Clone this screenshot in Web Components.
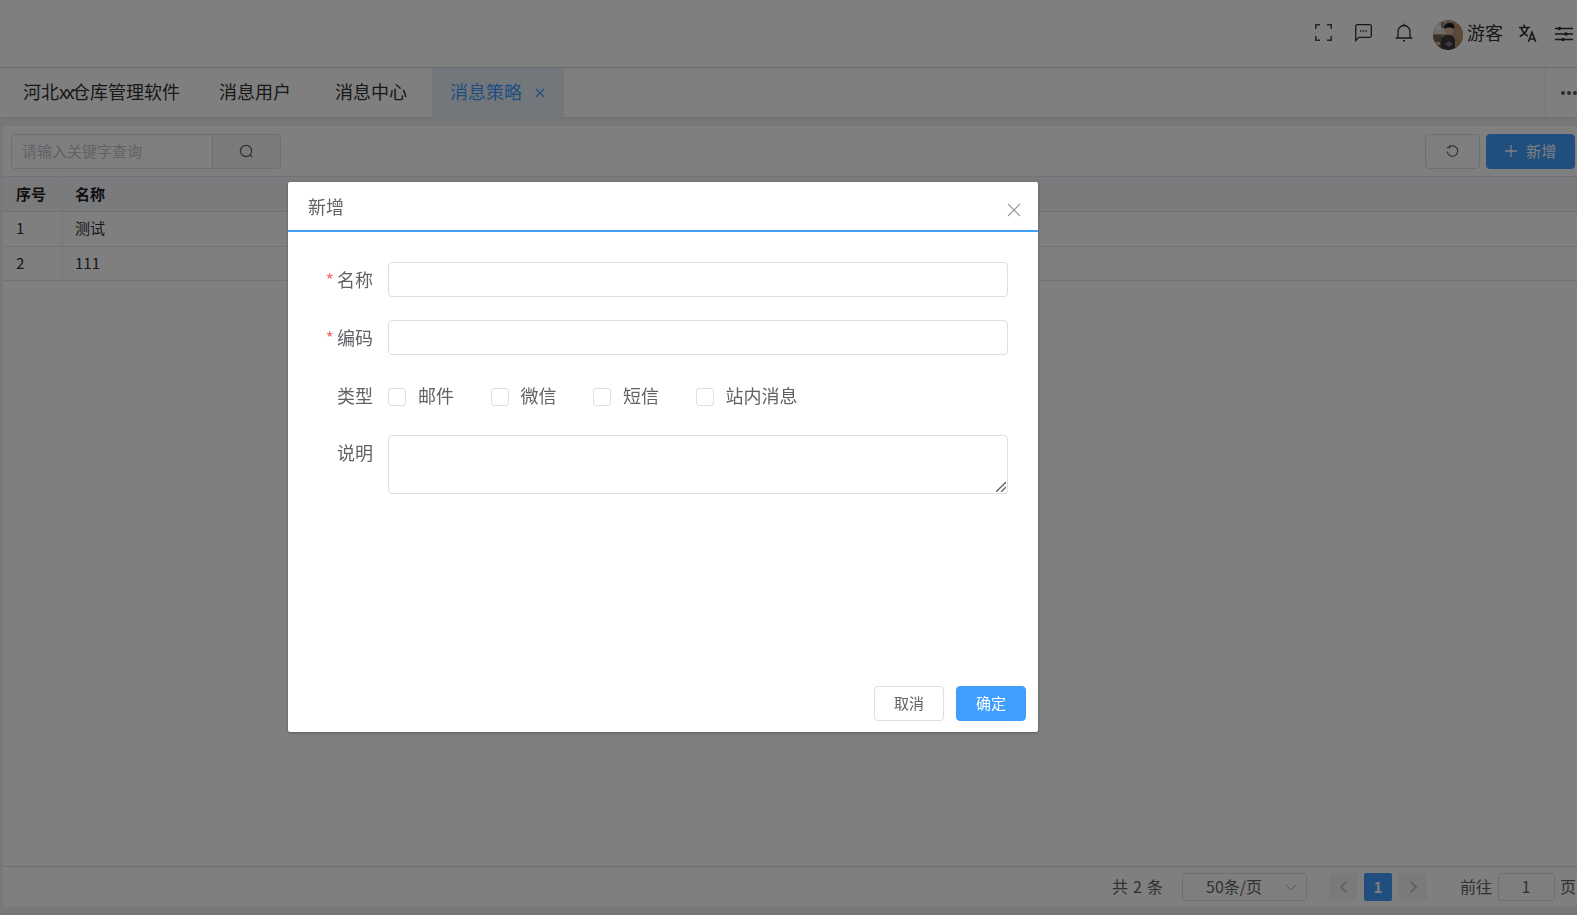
<!DOCTYPE html>
<html lang="zh-CN">
<head>
<meta charset="utf-8">
<title>消息策略</title>
<style>
  html, body { margin: 0; height: 100%; overflow: hidden; }
  body { font-family: "Noto Sans CJK SC", "Noto Sans", sans-serif; color: #303133; background: #eff1f4; }
</style>
</head>
<body>
<app-shell>
  <top-bar></top-bar>
  <tab-bar>
    <tab-item style="padding-right:19px">河北<span style="letter-spacing:-2.5px">xx</span>仓库管理软件</tab-item>
    <tab-item style="margin-right:4px">消息用户</tab-item>
    <tab-item style="margin-right:5px">消息中心</tab-item>
    <tab-item active>消息策略</tab-item>
  </tab-bar>
  <strategy-page></strategy-page>
</app-shell>
<modal-mask></modal-mask>
<add-dialog></add-dialog>

<script>
(function() {
  const icon = {
    search: '<svg width="15" height="15" viewBox="0 0 15 15" fill="none" stroke="currentColor" stroke-width="1.2"><circle cx="7" cy="7" r="5.6"/><path d="M11 11l2.4 2.4"/></svg>',
    refresh: '<svg width="15" height="15" viewBox="0 0 15 15" fill="none" stroke="currentColor" stroke-width="1.2"><path d="M4 3.2A5.2 5.2 0 1 1 2.3 7.5"/><path d="M4.6 1v2.7H1.9"/></svg>',
    plus: '<svg width="14" height="14" viewBox="0 0 14 14" stroke="currentColor" stroke-width="1.3"><path d="M7 1v12M1 7h12"/></svg>',
    close: '<svg width="14" height="14" viewBox="0 0 14 14" stroke="currentColor" stroke-width="1.1"><path d="M1 1l12 12M13 1L1 13"/></svg>',
  };

  function define(name, css, html, setup) {
    const template = document.createElement('template');
    template.innerHTML = `<style>${css}</style>${html}`;
    customElements.define(name, class extends HTMLElement {
      constructor() {
        super();
        this.attachShadow({ mode: 'open' });
        this.shadowRoot.appendChild(template.content.cloneNode(true));
        if (setup) setup(this);
      }
    });
  }

  define('app-shell', `
    :host { display: flex; flex-direction: column; height: 915px; }
  `, `<slot></slot>`);

  define('top-bar', `
    :host { display: flex; align-items: center; justify-content: flex-end; flex: none; height: 65px; padding: 0 4px 2px 0;
      background: #fff; border-bottom: 1px solid #dcdfe6; box-sizing: content-box; color: #303133; }
    svg { display: block; flex: none; }
    .name { font-size: 18px; line-height: 24px; margin: 0 16px 0 4px; padding-bottom: 2px; }
    .ic { margin-right: 23px; }
    .avatar { border-radius: 50%; margin: 5px 0 0 -1px; }
    .trans { margin: 1px 18px 0 0; }
    .tune { margin-top: 2px; }
  `, `
    <svg class="ic" width="17" height="17" viewBox="0 0 17 17" fill="none" stroke="#4a4a4a" stroke-width="1.5"><path d="M.8 5V.8H5M12 .8h4.2V5M16.2 12v4.2H12M5 16.2H.8V12"/></svg>
    <svg class="ic" width="17" height="18" viewBox="0 0 17 18" fill="none" stroke="#303133" stroke-width="1.3"><path d="M2.2.7h12.6a1.5 1.5 0 0 1 1.5 1.5v9.6a1.5 1.5 0 0 1-1.5 1.5H3.6L.7 16.6V2.2A1.5 1.5 0 0 1 2.2.7z"/><path d="M5 7h1.4M7.8 7h1.4M10.6 7H12" stroke-width="1.5"/></svg>
    <svg class="ic" style="margin-right:21px" width="18" height="19" viewBox="0 0 18 19" fill="none" stroke="#303133" stroke-width="1.3"><path d="M.5 15h17M3 15V8.500a6 6 0 0 1 12 0V15"/><path d="M9 .8v1.600M8 17.700h2" stroke-width="1.400"/></svg>
    <svg class="avatar" width="30" height="30" viewBox="0 0 30 30">
      <rect width="30" height="30" fill="#a8957f"/>
      <rect x="0" y="0" width="13" height="14" fill="#d8d4ca"/>
      <rect x="22" y="4" width="8" height="26" fill="#b8926a"/>
      <rect x="3" y="6" width="5" height="4" fill="#f2efe8"/>
      <rect x="8" y="2" width="4" height="6" fill="#8a8378"/>
      <rect x="0" y="15" width="9" height="15" fill="#77634f"/>
      <rect x="2" y="22" width="5" height="3" fill="#c9b8a0"/>
      <path d="M8 30v-9c0-4 3-6 7-6s7 2 7 6v9z" fill="#3a3a3e"/>
      <circle cx="16" cy="10" r="4.500" fill="#d8ae92"/>
      <path d="M11 9c0-5 3-6 6-6s5 2 4 6c-3-2-7-2-10 0z" fill="#1a1a1f"/>
      <path d="M12 24l4-3 4 3-4 3z" fill="#77777c"/>
    </svg>
    <span class="name">游客</span>
    <svg class="ic trans" width="18" height="18" viewBox="0 0 18 18" fill="none" stroke="#303133" stroke-width="1.600"><path d="M0 3.500h11M5.200 .5v3M8.800 3.500C7.800 7.500 4.800 10.500.8 12.500M2 3.500c1 3.500 3.500 6.500 7 8.500"/><path d="M9.500 17.800l3.500-9.500 3.700 9.500M10.700 15h4.800" stroke-width="1.600"/></svg>
    <svg class="tune" width="18" height="16" viewBox="0 0 18 16" stroke="#303133" stroke-width="1.400"><path d="M0 2.500h18M0 8h18M0 13.500h18"/><circle cx="4.500" cy="2.500" r="1.800" fill="#303133" stroke="none"/><circle cx="11" cy="8" r="1.800" fill="#303133" stroke="none"/><circle cx="8" cy="13.500" r="1.800" fill="#303133" stroke="none"/></svg>
  `);

  define('tab-bar', `
    :host { display: flex; flex: none; height: 49px; background: #fff; position: relative;
      box-shadow: 0 1px 4px rgba(0,21,41,.08); }
    .tabs { display: flex; flex: 1; padding-left: 3px; }
    .more { flex: none; width: 32px; border-left: 1px solid #e8eaee; display: flex; align-items: center;
      justify-content: flex-start; gap: 2px; padding-left: 15px; box-sizing: border-box; }
    .more i { width: 4px; height: 4px; border-radius: 50%; background: #555; flex: none; }
  `, `
    <div class="tabs"><slot></slot></div>
    <div class="more"><i></i><i></i><i></i></div>
  `);

  define('tab-item', `
    :host { display: flex; align-items: center; box-sizing: border-box; height: 49px; padding: 0 20px 4px 20px;
      font-size: 18px; color: #303133; white-space: nowrap; }
    :host([active]) { background: #e6eff8; color: #409eff; padding: 0 19px 4px 18px; margin: 0; }
    :host([active]) svg { display: block; margin: 4px 0 0 13px; }
    svg { display: none; }
  `, `
    <slot></slot>
    <svg width="10" height="10" viewBox="0 0 10 10" stroke="currentColor" stroke-width="1.200"><path d="M1 1l8 8M9 1L1 9"/></svg>
  `);

  define('strategy-page', `
    :host { display: flex; flex-direction: column; flex: 1; min-height: 0; margin: 9px 0 8px 3px; background: #fff; }
    .bar { display: flex; align-items: center; justify-content: space-between; flex: none; height: 50px; padding: 0 2px 0 8px; box-sizing: border-box; }
    .right { display: flex; gap: 6px; }
    .fill { flex: 1; }
  `, `
    <div class="bar">
      <search-box></search-box>
      <div class="right">
        <tool-button>${icon.refresh}</tool-button>
        <tool-button primary>${icon.plus}<span>新增</span></tool-button>
      </div>
    </div>
    <data-table></data-table>
    <div class="fill"></div>
    <table-pager></table-pager>
  `);

  define('search-box', `
    :host { display: flex; box-sizing: border-box; width: 270px; height: 35px; border: 1px solid #dcdfe6; border-radius: 4px; overflow: hidden; }
    input { flex: none; width: 200px; box-sizing: border-box; border: 0; outline: 0; padding: 0 10px 2px; font: 15px "Noto Sans CJK SC", sans-serif; background: #fff; }
    input::placeholder { color: #c0c4cc; opacity: 1; }
    .go { flex: 1; display: flex; align-items: center; justify-content: center; background: #f5f7fa; border-left: 1px solid #dcdfe6; color: #606266; }
    svg { display: block; }
  `, `
    <input placeholder="请输入关键字查询">
    <div class="go">${icon.search}</div>
  `);

  define('tool-button', `
    :host { display: flex; align-items: center; justify-content: center; gap: 8px; box-sizing: border-box; width: 54.500px; height: 35px;
      border: 1px solid #dcdfe6; border-radius: 4px; background: #fff; color: #606266; font-size: 15px; }
    :host([primary]) { width: 89.500px; background: #409eff; border-color: #409eff; color: #fff; }
    ::slotted(svg) { display: block; }
    ::slotted(span) { padding-bottom: 2px; }
  `, `<slot></slot>`);

  define('data-table', `
    :host { display: block; flex: none; }
    .row { display: grid; grid-template-columns: 60px 340px 266px 1fr; height: 35px; box-sizing: border-box; border-bottom: 1px solid #e3e5ea; font-size: 15px; line-height: 32px; }
    .row.head { border-top: 1px solid #e3e5ea; background: #f5f7fa; font-weight: 700; color: #1f2022; height: 36px; line-height: 34px; }
    .row.last { height: 34px; }
    .row > div { padding: 0 12px; border-right: 1px solid #eceef2; }
    .row > div:first-child { padding-left: 13px; }
    .row > div:last-child { border-right: 0; }
  `, `
    <div class="row head"><div>序号</div><div>名称</div><div></div><div></div></div>
    <div class="row"><div>1</div><div>测试</div><div></div><div></div></div>
    <div class="row last"><div>2</div><div>111</div><div></div><div></div></div>
  `);

  define('table-pager', `
    :host { display: flex; align-items: center; flex: none; height: 41px; box-sizing: border-box; border-top: 1px solid #dcdfe6; padding-left: 1109px;
      font-size: 16px; color: #606266; white-space: nowrap; overflow: hidden; }
    span { padding-bottom: 2px; }
    .total { width: 70px; flex: none; word-spacing: 1.500px; }
    .size { flex: none; display: flex; align-items: center; box-sizing: border-box; width: 125px; height: 28px; border: 1px solid #dcdfe6; border-radius: 3px; padding-left: 23px; justify-content: space-between; padding-right: 9px; }
    .page { flex: none; width: 28px; height: 28px; border-radius: 2px; background: #f4f4f5; display: flex; align-items: center; justify-content: center; color: #c0c4cc; font-size: 15px; }
    .page.on { background: #409eff; color: #fff; font-weight: 700; margin: 0 7px; padding-bottom: 2px; box-sizing: border-box; }
    .prev { margin-left: 22px; }
    .goto { margin-left: 33px; }
    .jump { flex: none; box-sizing: border-box; width: 57px; height: 28px; margin: 0 5.500px; border: 1px solid #dcdfe6; border-radius: 3px; text-align: center; line-height: 24px; }
    svg { display: block; }
  `, `
    <span class="total">共 2 条</span>
    <div class="size"><span>50条/页</span><svg width="12" height="7" viewBox="0 0 12 7" fill="none" stroke="#c0c4cc" stroke-width="1.200"><path d="M1 1l5 5 5-5"/></svg></div>
    <div class="page prev"><svg width="9" height="14" viewBox="0 0 9 14" fill="none" stroke="currentColor" stroke-width="2"><path d="M7.500 1.500L2 7l5.500 5.500"/></svg></div>
    <div class="page on">1</div>
    <div class="page"><svg width="9" height="14" viewBox="0 0 9 14" fill="none" stroke="currentColor" stroke-width="2"><path d="M1.500 1.500L7 7l-5.500 5.500"/></svg></div>
    <span class="goto">前往</span>
    <div class="jump">1</div>
    <span>页</span>
  `);

  define('modal-mask', `
    :host { display: block; position: fixed; inset: 0; background: rgba(0,0,0,.5); }
  `, ``);

  define('form-row', `
    :host { display: flex; align-items: flex-start; margin-bottom: 23px; }
    .label { flex: none; width: 100px; box-sizing: border-box; padding-right: 15px; text-align: right; font-size: 18px; line-height: 35px; color: #606266; white-space: nowrap; }
    :host([required]) .label::before { content: "*"; color: #f56c6c; margin-right: 3px; font-size: 18px; }
    .ctl { flex: 1; min-width: 0; }
  `, `
    <div class="label"><slot name="label"></slot></div>
    <div class="ctl"><slot></slot></div>
  `);

  define('text-field', `
    :host { display: block; position: relative; }
    input, textarea { display: block; width: 100%; box-sizing: border-box; border: 1px solid #dcdfe6; border-radius: 4px; outline: 0; background: #fff; font: 15px "Noto Sans CJK SC", sans-serif; padding: 0 10px; }
    input { height: 35px; }
    textarea { height: 59px; padding: 5px 10px; resize: none; }
    svg { position: absolute; right: 2px; bottom: 2px; display: block; }
  `, ``, el => {
    const multi = el.hasAttribute('multi');
    el.shadowRoot.appendChild(document.createElement(multi ? 'textarea' : 'input'));
    if (multi) {
      const grip = document.createElement('template');
      grip.innerHTML = '<svg width="10" height="10" viewBox="0 0 10 10" stroke="#5f5f5f" stroke-width="1.400"><path d="M0 10L10 0M5 10l5-5"/></svg>';
      el.shadowRoot.appendChild(grip.content);
    }
  });

  define('check-item', `
    :host { display: flex; align-items: center; flex: none; width: 102.500px; font-size: 18px; color: #606266; white-space: nowrap; line-height: 35px; }
    :host([wide]) { width: auto; }
    i { display: block; flex: none; width: 18px; height: 18px; box-sizing: border-box; border: 1px solid #dcdfe6; border-radius: 3px; background: #fff; margin: 3px 12px 0 0; }
  `, `<i></i><slot></slot>`);

  define('check-group', `
    :host { display: flex; height: 35px; }
  `, `<slot></slot>`);

  define('dialog-button', `
    :host { display: flex; align-items: center; justify-content: center; box-sizing: border-box; width: 70px; height: 35px; padding-bottom: 2px; border: 1px solid #dcdfe6; border-radius: 4px; background: #fff; color: #606266; font-size: 15px; }
    :host([primary]) { background: #409eff; border-color: #409eff; color: #fff; }
  `, `<slot></slot>`);

  define('add-dialog', `
    :host { display: flex; flex-direction: column; position: fixed; left: 288px; top: 182px; width: 750px; height: 550px;
      background: #fff; border-radius: 2px; box-shadow: 0 1px 3px rgba(0,0,0,.3); }
    header { display: flex; align-items: center; justify-content: space-between; flex: none; height: 48px; border-bottom: 2px solid #409eff; padding: 0 17px 0 20px; font-size: 18px; color: #606266; }
    header svg { display: block; color: #909399; margin-top: 8px; }
    .body { flex: 1; padding: 30px 30px 0 0; }
    footer { display: flex; justify-content: flex-end; gap: 12px; flex: none; padding: 0 12px 11px 0; }
  `, `
    <header><span>新增</span>${icon.close}</header>
    <div class="body">
      <form-row required><span slot="label">名称</span><text-field></text-field></form-row>
      <form-row required><span slot="label">编码</span><text-field></text-field></form-row>
      <form-row style="margin-bottom:22px"><span slot="label">类型</span>
        <check-group>
          <check-item>邮件</check-item>
          <check-item>微信</check-item>
          <check-item>短信</check-item>
          <check-item wide>站内消息</check-item>
        </check-group>
      </form-row>
      <form-row><span slot="label">说明</span><text-field multi></text-field></form-row>
    </div>
    <footer>
      <dialog-button>取消</dialog-button>
      <dialog-button primary>确定</dialog-button>
    </footer>
  `);
})();
</script>
</body>
</html>
